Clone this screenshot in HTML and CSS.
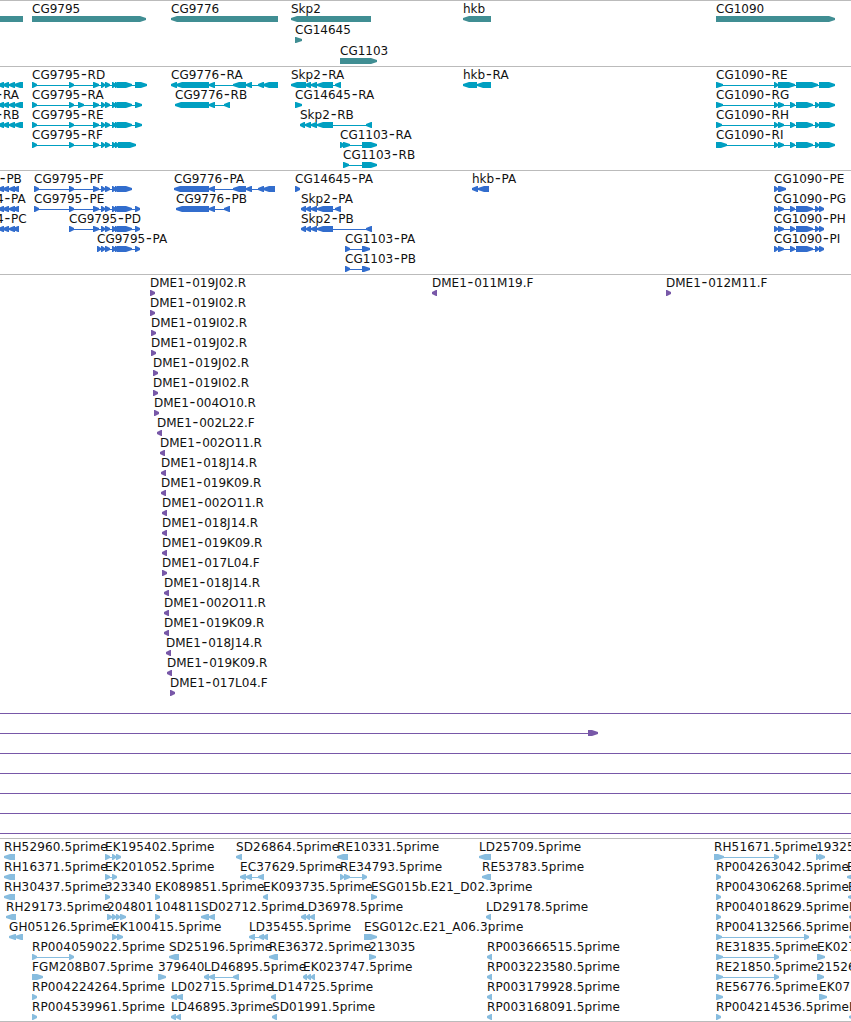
FILE: index.html
```html
<!DOCTYPE html>
<html lang="en">
<head>
    <meta charset="UTF-8">
    <meta name="viewport" content="width=device-width, initial-scale=1.0">
    <title>Genome Browser</title>
    <link rel="stylesheet" href="styles.css">
</head>
<body>
    <main class="browser">
        <section class="track genes"><svg id="genes"></svg></section>
        <section class="track transcripts"><svg id="transcripts"></svg></section>
        <section class="track proteins"><svg id="proteins"></svg></section>
        <section class="track bacs"><svg id="bacs"></svg></section>
        <section class="track ests"><svg id="ests"></svg></section>
    </main>
    <script src="tracks.js"></script>
</body>
</html>
```
FILE: styles.css
```css
body { margin: 0; background: #fff; overflow: hidden; }
.browser { display: flex; flex-direction: column; height: 1022px; overflow: hidden; }
.track { box-sizing: border-box; flex: none; border-top: 1px solid #bbb; overflow: hidden; }
.track svg { display: block; width: 100%; height: 100%; font-family: "DejaVu Sans", sans-serif; font-size: 12px; }
.track text { fill: #111; }
.track .dash { font-size: 16px; }
.track line { stroke: currentColor; stroke-width: 1; shape-rendering: crispEdges; }
.track polygon { fill: currentColor; }
.genes { height: 66px; color: #408e93; }
.transcripts { height: 104px; color: #009fc1; }
.proteins { height: 104px; color: #326dcd; }
.bacs { height: 564px; color: #7858a8; }
.ests { height: 184px; color: #88bddf; border-bottom: 1px solid #bbb; }
.ests text { letter-spacing: 0.13px; }
```
FILE: tracks.js
```js
const SVG_NS = 'http://www.w3.org/2000/svg';

// One feature per line: row | label | strand | exons (start-end) | label x if not the first exon
const tracks = {
    genes: `
0||<|-9,23
0|CG9795|>|32,146
0|CG9776|<|171,278
0|Skp2|<|291,371
1|CG14645|>|295,302
2|CG1103|>|340,377
0|hkb|<|463,491
0|CG1090|>|716,835`,
    transcripts: `
0||<|-2,4 3,9 9,15 14,23
1|-RA|<|-2,4 3,9 9,15 14,23|-4.5
2|-RB|<|-2,4 3,9 9,15 14,23|-4.5
0|CG9795-RD|>|32,37 69,74 93,99 101,105 105,110 112,116 115,119 117,132 135,147
1|CG9795-RA|>|32,37 69,74 78,84 93,99 101,105 105,110 112,116 115,119 117,132 135,142
2|CG9795-RE|>|32,37 69,74 93,99 101,105 105,110 112,116 115,119 117,132 135,142
3|CG9795-RF|>|32,37 69,74 93,99 101,105 105,110 112,116 115,119 118,136
0|CG9776-RA|<|171,177 176,209 209,215 233,246 246,252 258,264 263,278
1|CG9776-RB|<|175,209 209,215 224,230
0|Skp2-RA|<|291,306 305,311 311,317 317,333 335,341
1|CG14645-RA|>|295,302
2|Skp2-RB|<|300,305 305,311 311,317 317,333 366,372
3|CG1103-RA|>|340,344 343,350 362,377
4|CG1103-RB|>|343,349 362,377
0|hkb-RA|<|463,477 477,491
0|CG1090-RE|>|716,723 774,778 778,795 796,818 819,835
1|CG1090-RG|>|716,723 774,778 778,784 790,795 796,813 815,819 819,835
2|CG1090-RH|>|716,722 774,778 778,784 790,795 796,813 815,819 819,835
3|CG1090-RI|>|716,727 774,778 778,784 790,795 796,813 815,819 819,835`,
    proteins: `
0|-PB|<|-2,4 3,9 9,15 13,19|-1
1|4-PA|<|-2,4 3,9 9,15 13,19|-4
2|4-PC|<|-2,4 3,9 9,15 13,19|-4
0|CG9795-PF|>|34,39 69,74 93,99 101,105 105,110 112,116 115,119 117,132
1|CG9795-PE|>|34,39 69,74 93,99 101,105 105,110 112,116 115,119 117,132 135,140
2|CG9795-PD|>|69,74 93,99 101,105 105,110 112,116 115,119 117,132 135,140
3|CG9795-PA|>|97,101 101,105 105,110 112,116 115,119 117,132 135,140
0|CG9776-PA|<|174,209 209,215 233,246 246,252 258,264 263,275
1|CG9776-PB|<|176,209 209,215 224,230
0|CG14645-PA|>|295,300
1|Skp2-PA|<|301,306 306,311 311,317 317,333 335,341
2|Skp2-PB|<|301,306 306,311 311,317 317,333 366,372
3|CG1103-PA|>|345,350 362,370
4|CG1103-PB|>|345,350 362,370
0|hkb-PA|<|472,478 478,489
0|CG1090-PE|>|774,778 778,786
1|CG1090-PG|>|774,778 778,784 790,795 796,813 815,819 819,824
2|CG1090-PH|>|774,778 778,784 790,795 796,813 815,819 819,824
3|CG1090-PI|>|774,778 778,784 790,795 796,813 815,819 819,824`,
    bacs: `
0|DME1-019J02.R|>|150,155
1|DME1-019I02.R|>|150,155
2|DME1-019I02.R|>|151,156
3|DME1-019J02.R|>|151,156
4|DME1-019J02.R|>|153,158
5|DME1-019I02.R|>|153,158
6|DME1-004O10.R|>|154,159
7|DME1-002L22.F|<|157,162
8|DME1-002O11.R|<|160,165
9|DME1-018J14.R|<|161,166
10|DME1-019K09.R|<|161,166
11|DME1-002O11.R|<|162,167
12|DME1-018J14.R|<|162,167
13|DME1-019K09.R|<|162,167
14|DME1-017L04.F|>|162,167
15|DME1-018J14.R|<|164,169
16|DME1-002O11.R|<|164,169
17|DME1-019K09.R|<|164,169
18|DME1-018J14.R|<|166,171
19|DME1-019K09.R|<|167,172
20|DME1-017L04.F|>|170,175
0|DME1-011M19.F|<|432,437
0|DME1-012M11.F|>|666,671
21||>|-20,-10 861,871
22||>|-20,-10 588,598
23||>|-20,-10 861,871
24||>|-20,-10 861,871
25||>|-20,-10 861,871
26||>|-20,-10 861,871
27||>|-20,-10 861,871`,
    ests: `
0|RH52960.5prime|<|4,15
0|EK195402.5prime|>|105,110 112,116 116,121
0|SD26864.5prime|<|236,242
0|RE10331.5prime|<|337,348
0|LD25709.5prime|<|479,491
0|RH51671.5prime|>|714,724 774,779
0|19325|>|816,820 819,825
1|RH16371.5prime|<|4,15
1|EK201052.5prime|>|105,110 112,117
1|EC37629.5prime|<|240,246 246,252 258,264
1|RE34793.5prime|>|340,344 344,350 362,367
1|RE53783.5prime|<|482,491
1|RP004263042.5prime|>|716,721
1|E|<|847,856
2|RH30437.5prime|<|4,15
2|323340|>|105,110
2|EK089851.5prime|>|155,160
2|EK093735.5prime|<|263,268
2|ESG015b.E21_D02.3prime|>|371,377
2|RP004306268.5prime|>|716,721
2|E|<|848,856
3|RH29173.5prime|<|6,16
3|204801|>|107,112 112,116 116,120 120,126
3|104811|>|155,160
3|SD02712.5prime|<|201,209 209,215
3|LD36978.5prime|<|301,306 306,310 310,315
3|LD29178.5prime|<|486,491
3|RP004018629.5prime|>|716,721
3|L|<|849,857
4|GH05126.5prime|<|9,16 15,23
4|EK100415.5prime|>|112,117 117,123
4|LD35455.5prime|<|249,255 259,264 263,268
4|ESG012c.E21_A06.3prime|>|364,377
4|RP004132566.5prime|>|716,722 804,809
4|L|<|849,857
5|RP004059022.5prime|>|32,37 69,74
5|SD25196.5prime|<|169,179
5|RE36372.5prime|<|269,278
5|213035|>|369,376
5|RP003666515.5prime|<|487,492
5|RE31835.5prime|>|716,723 774,779
5|EK027|>|817,825
6|FGM208B07.5prime|>|32,43
6|379640|>|158,166
6|LD46895.5prime|<|204,209 209,215 233,239
6|EK023747.5prime|<|303,307 307,311 311,315
6|RP003223580.5prime|<|487,492
6|RE21850.5prime|>|716,723 774,779
6|21526|>|817,820 818,824
7|RP004224264.5prime|>|32,37
7|LD02715.5prime|<|171,177 176,183
7|LD14725.5prime|<|271,276
7|RP003179928.5prime|<|487,492
7|RE56776.5prime|>|716,723
7|EK07|>|819,827
8|RP004539961.5prime|>|32,37
8|LD46895.3prime|<|171,176 176,181
8|SD01991.5prime|<|272,277
8|RP003168091.5prime|<|487,492
8|RP004214536.5prime|>|716,721
8|L|<|849,857`
};

function add(parent, name, attrs) {
    const el = document.createElementNS(SVG_NS, name);
    for (const key in attrs) el.setAttribute(key, attrs[key]);
    parent.appendChild(el);
    return el;
}

// Exon block with a pointed end in the direction of the strand
function drawExon(svg, start, end, top, strand) {
    const length = end - start;
    const head = length > 7 ? 6 : length - 1;
    const tip = strand === '>' ? end : start;
    const back = strand === '>' ? start : end;
    const neck = strand === '>' ? end - head : start + head;
    const bottom = top + 6;
    add(svg, 'polygon', {
        points: `${back},${top} ${neck},${top} ${tip},${top + 2} ${tip},${top + 4} ${neck},${bottom} ${back},${bottom}`
    });
}

function drawTrack(id) {
    const svg = document.getElementById(id);
    const pitch = id === 'genes' ? 21 : 20;
    tracks[id].trim().split('\n').forEach(entry => {
        const [row, label, strand, blocks, labelX] = entry.split('|');
        const exons = blocks.split(' ').map(b => b.split(',').map(Number));
        const top = row * pitch + 15;
        add(svg, 'line', { x1: exons[0][0], x2: exons[exons.length - 1][1] - 1, y1: top + 3.5, y2: top + 3.5 });
        exons.forEach(([start, end]) => drawExon(svg, start, end, top, strand));
        if (!label) return;
        const text = add(svg, 'text', { x: labelX === undefined ? exons[0][0] : labelX, y: top - 3 });
        const [name, suffix] = label.split('-');
        if (suffix === undefined) {
            text.textContent = label;
            return;
        }
        // long dash with a little air on both sides
        add(text, 'tspan', {}).textContent = name;
        add(text, 'tspan', { class: 'dash', dx: 0.8 }).textContent = '-';
        add(text, 'tspan', { dx: 0.8 }).textContent = suffix;
    });
}

Object.keys(tracks).forEach(drawTrack);
```
